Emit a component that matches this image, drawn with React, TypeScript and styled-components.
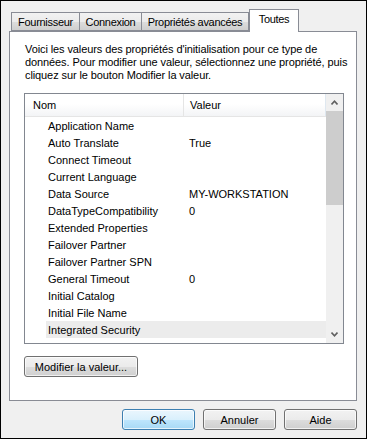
import styled, { createGlobalStyle } from "styled-components";

const GlobalStyle = createGlobalStyle`
  html, body {
    margin: 0;
    padding: 0;
    background: #ffffff;
  }
  body {
    font-family: "Liberation Sans", Arial, sans-serif;
    font-size: 11px;
    color: #000000;
  }
`;

const Window = styled.div`
  box-sizing: border-box;
  width: 367px;
  height: 439px;
  border: 1px solid #000000;
  background: #f0f0f0;
  padding: 8px 9px 0 8px;
  display: flex;
  flex-direction: column;
`;

const TabStrip = styled.div`
  display: flex;
  align-items: flex-end;
  height: 22px;
  padding-left: 2px;
  position: relative;
  z-index: 1;
`;

const Tab = styled.div<{ $active?: boolean; $width: number }>`
  box-sizing: border-box;
  display: flex;
  align-items: center;
  justify-content: center;
  width: ${(p) => p.$width}px;
  height: ${(p) => (p.$active ? "23px" : "19px")};
  margin-bottom: ${(p) => (p.$active ? "-1px" : "0")};
  border: 1px solid #898c95;
  border-bottom: ${(p) => (p.$active ? "none" : "1px solid #898c95")};
  border-left-width: ${(p) => (p.$active ? "1px" : "0")};
  background: ${(p) =>
    p.$active ? "#ffffff" : "linear-gradient(#f2f2f2 0%, #ebebeb 50%, #dddddd 51%, #cfcfcf 100%)"};
  padding-bottom: ${(p) => (p.$active ? "4px" : "0")};
  letter-spacing: -0.3px;
  white-space: nowrap;

  &:first-child {
    border-left-width: 1px;
  }
`;

const Panel = styled.div`
  box-sizing: border-box;
  width: 348px;
  height: 370px;
  border: 1px solid #898c95;
  background: #ffffff;
  padding: 11px 12px 0 14px;
  display: flex;
  flex-direction: column;
`;

const Intro = styled.p`
  margin: 0 -8px 11px 1px;
  line-height: 13px;
  letter-spacing: -0.1px;
`;

const ListBox = styled.div`
  box-sizing: border-box;
  width: 320px;
  height: 251px;
  border: 1px solid #828790;
  display: flex;
`;

const ListContent = styled.div`
  flex: 1;
  overflow: hidden;
  display: flex;
  flex-direction: column;
`;

const HeaderRow = styled.div`
  display: grid;
  grid-template-columns: 159px 1fr;
  height: 22px;
  flex: none;
  background: linear-gradient(#ffffff 0%, #ffffff 45%, #f3f4f6 100%);
  border-bottom: 1px solid #e5e5e5;
`;

const HeaderCell = styled.div<{ $first?: boolean }>`
  display: flex;
  align-items: center;
  padding-left: ${(p) => (p.$first ? "8px" : "6px")};
  border-right: 1px solid ${(p) => (p.$first ? "#e5e5e5" : "#dfe8f0")};
`;

const Row = styled.div<{ $selected?: boolean }>`
  display: grid;
  grid-template-columns: 138px 1fr;
  height: 17px;
  flex: none;
  margin-left: 21px;
  align-items: center;
  background: ${(p) => (p.$selected ? "#ececec" : "transparent")};
`;

const NameCell = styled.div`
  padding-left: 2px;
  white-space: nowrap;
`;

const ValueCell = styled.div`
  padding-left: 5px;
  white-space: nowrap;
`;

const ScrollBar = styled.div`
  width: 17px;
  flex: none;
  background: #f0f0f0;
  display: flex;
  flex-direction: column;
`;

const ScrollArrow = styled.div`
  height: 17px;
  flex: none;
  display: flex;
  align-items: center;
  justify-content: center;
`;

const ScrollThumb = styled.div`
  height: 94px;
  background: #cdcdcd;
  flex: none;
`;

const ScrollTrack = styled.div`
  flex: 1;
`;

const Button = styled.button<{ $default?: boolean; $width?: number }>`
  box-sizing: border-box;
  width: ${(p) => p.$width ?? 73}px;
  height: 21px;
  padding: 0;
  border: 1px solid ${(p) => (p.$default ? "#3c7fb1" : "#707070")};
  border-radius: 3px;
  font-family: "Liberation Sans", Arial, sans-serif;
  font-size: 11px;
  color: #000000;
  background: ${(p) =>
    p.$default
      ? "linear-gradient(#eaf6fd 0%, #d9f0fc 50%, #bee6fd 51%, #a7d9f5 100%)"
      : "linear-gradient(#f2f2f2 0%, #ebebeb 50%, #dddddd 51%, #cfcfcf 100%)"};
  box-shadow: inset 0 0 0 1px rgba(255, 255, 255, 0.7);
`;

const EditButtonRow = styled.div`
  margin-top: 12px;
  display: flex;
`;

const Footer = styled.div`
  display: flex;
  justify-content: flex-end;
  gap: 8px;
  margin-top: 8px;
  width: 348px;
`;

const Chevron = ({ up }: { up?: boolean }) => (
  <svg width="7" height="5" viewBox="0 0 7 5">
    <path
      d={up ? "M0.5 4.5 L3.5 1.2 L6.5 4.5" : "M0.5 0.5 L3.5 3.8 L6.5 0.5"}
      fill="none"
      stroke="#606060"
      strokeWidth="1.6"
    />
  </svg>
);

const tabs = [
  { label: "Fournisseur", width: 69 },
  { label: "Connexion", width: 62 },
  { label: "Propriétés avancées", width: 107 },
  { label: "Toutes", width: 50, active: true },
];

const properties: Array<{ name: string; value?: string }> = [
  { name: "Application Name" },
  { name: "Auto Translate", value: "True" },
  { name: "Connect Timeout" },
  { name: "Current Language" },
  { name: "Data Source", value: "MY-WORKSTATION" },
  { name: "DataTypeCompatibility", value: "0" },
  { name: "Extended Properties" },
  { name: "Failover Partner" },
  { name: "Failover Partner SPN" },
  { name: "General Timeout", value: "0" },
  { name: "Initial Catalog" },
  { name: "Initial File Name" },
  { name: "Integrated Security" },
];

const App = () => {
  return (
    <>
      <GlobalStyle />
      <Window>
        <TabStrip>
          {tabs.map((tab) => (
            <Tab key={tab.label} $width={tab.width} $active={tab.active}>
              {tab.label}
            </Tab>
          ))}
        </TabStrip>
        <Panel>
          <Intro>
            Voici les valeurs des propriétés d'initialisation pour ce type de
            données. Pour modifier une valeur, sélectionnez une propriété, puis
            cliquez sur le bouton Modifier la valeur.
          </Intro>
          <ListBox>
            <ListContent>
              <HeaderRow>
                <HeaderCell $first>Nom</HeaderCell>
                <HeaderCell>Valeur</HeaderCell>
              </HeaderRow>
              {properties.map((prop) => (
                <Row key={prop.name} $selected={prop.name === "Integrated Security"}>
                  <NameCell>{prop.name}</NameCell>
                  <ValueCell>{prop.value ?? ""}</ValueCell>
                </Row>
              ))}
            </ListContent>
            <ScrollBar>
              <ScrollArrow>
                <Chevron up />
              </ScrollArrow>
              <ScrollThumb />
              <ScrollTrack />
              <ScrollArrow>
                <Chevron />
              </ScrollArrow>
            </ScrollBar>
          </ListBox>
          <EditButtonRow>
            <Button $width={114}>Modifier la valeur...</Button>
          </EditButtonRow>
        </Panel>
        <Footer>
          <Button $default>OK</Button>
          <Button>Annuler</Button>
          <Button>Aide</Button>
        </Footer>
      </Window>
    </>
  );
};

export default App;
